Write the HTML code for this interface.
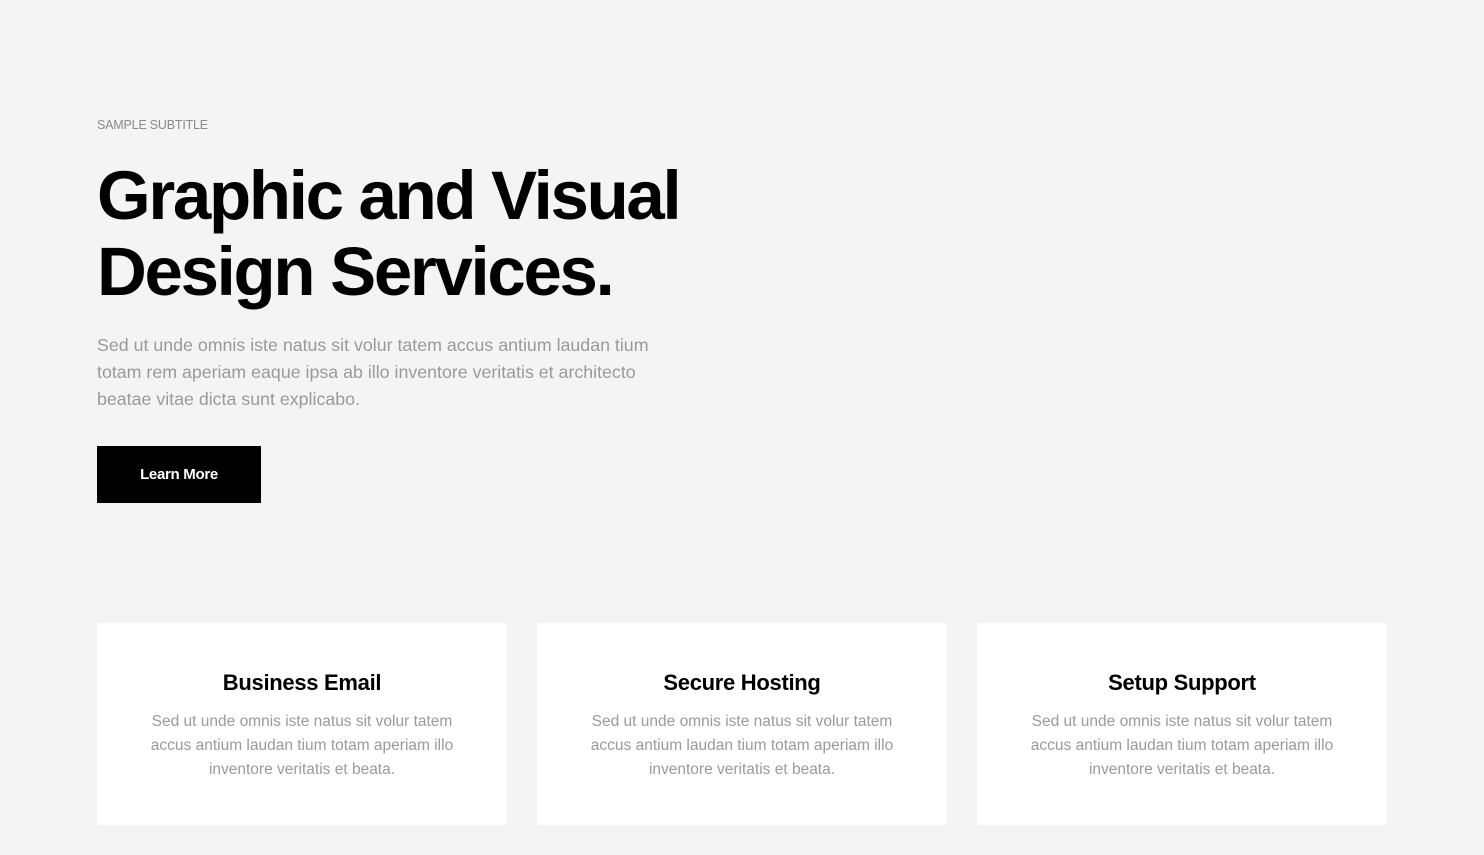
<!DOCTYPE html>
<html><head><meta charset="utf-8"><style>
body{margin:0;background:#f4f4f4;font-family:"Liberation Sans",sans-serif;width:1484px;height:855px;overflow:hidden;position:relative}
.sub{position:absolute;left:97px;top:118px;font-size:12.5px;color:#8a8a8a;letter-spacing:-0.2px}
h1{position:absolute;left:97px;top:158px;margin:0;font-size:69px;line-height:76px;font-weight:bold;color:#000;letter-spacing:-2.3px;white-space:nowrap}
.p{position:absolute;left:97px;top:332px;font-size:17.8px;line-height:27px;color:#9a9a9a;letter-spacing:0;white-space:nowrap}
.btn{position:absolute;left:97px;top:446px;width:164px;height:57px;background:#000;color:#fff;font-weight:bold;font-size:15px;display:flex;align-items:center;justify-content:center;letter-spacing:-0.3px}
.card{position:absolute;top:623px;width:410px;height:202px;background:#fff;text-align:center}
.card h3{margin:46px 0 0;font-size:22px;line-height:28px;font-weight:bold;color:#000;letter-spacing:-0.3px}
.card p{margin:13px 0 0;font-size:15.5px;line-height:24px;color:#9a9a9a;letter-spacing:0;white-space:nowrap}
</style></head><body>
<div class="sub">SAMPLE SUBTITLE</div>
<h1>Graphic and Visual<br>Design Services.</h1>
<div class="p">Sed ut unde omnis iste natus sit volur tatem accus antium laudan tium<br>totam rem aperiam eaque ipsa ab illo inventore veritatis et architecto<br>beatae vitae dicta sunt explicabo.</div>
<div class="btn">Learn More</div>
<div class="card" style="left:97px"><h3>Business Email</h3><p>Sed ut unde omnis iste natus sit volur tatem<br>accus antium laudan tium totam aperiam illo<br>inventore veritatis et beata.</p></div>
<div class="card" style="left:537px"><h3>Secure Hosting</h3><p>Sed ut unde omnis iste natus sit volur tatem<br>accus antium laudan tium totam aperiam illo<br>inventore veritatis et beata.</p></div>
<div class="card" style="left:977px"><h3>Setup Support</h3><p>Sed ut unde omnis iste natus sit volur tatem<br>accus antium laudan tium totam aperiam illo<br>inventore veritatis et beata.</p></div>
</body></html>
